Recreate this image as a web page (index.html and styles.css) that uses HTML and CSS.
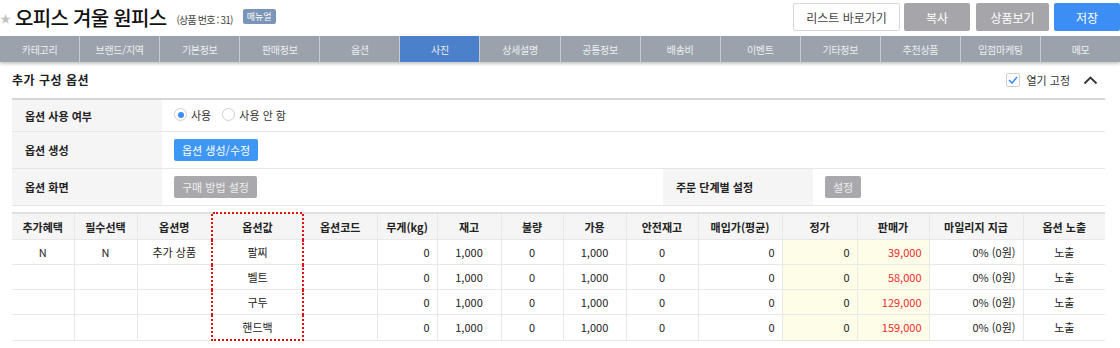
FILE: index.html
```html
<!DOCTYPE html>
<html lang="ko">
<head>
    <meta charset="UTF-8">
    <title>오피스 겨울 원피스</title>
    <link rel="stylesheet" href="styles.css">
</head>
<body>
<div class="topbar">
    <div class="title-area">
        <span class="star">&#9733;</span>
        <h1 class="title">오피스 겨울 원피스</h1>
        <span class="prod-no">(상품 번호 : 31)</span>
        <span class="manual">매뉴얼</span>
    </div>
    <div class="actions">
        <button class="btn btn-white">리스트 바로가기</button>
        <button class="btn btn-grey w-copy">복사</button>
        <button class="btn btn-grey w-view">상품보기</button>
        <button class="btn btn-blue w-save">저장</button>
    </div>
</div>

<div class="tabs">
    <div class="tab">카테고리</div>
    <div class="tab">브랜드/지역</div>
    <div class="tab">기본정보</div>
    <div class="tab">판매정보</div>
    <div class="tab">옵션</div>
    <div class="tab active">사진</div>
    <div class="tab">상세설명</div>
    <div class="tab">공통정보</div>
    <div class="tab">배송비</div>
    <div class="tab">이벤트</div>
    <div class="tab">기타정보</div>
    <div class="tab">추천상품</div>
    <div class="tab">입점마케팅</div>
    <div class="tab">메모</div>
</div>

<div class="section">
    <div class="section-head">
        <h2 class="section-title">추가 구성 옵션</h2>
        <div class="head-right">
            <span class="check">
                <svg width="10" height="8" viewBox="0 0 10 8"><path d="M1 4 L4 7 L9 1" fill="none" stroke="#3c8ef5" stroke-width="1.6"/></svg>
            </span>
            <span class="fix-label">열기 고정</span>
            <svg class="caret" width="15" height="10" viewBox="0 0 15 10"><path d="M1.5 8.5 L7.5 2.5 L13.5 8.5" fill="none" stroke="#333" stroke-width="1.8"/></svg>
        </div>
    </div>

    <table class="form">
        <colgroup>
            <col class="c-label">
            <col class="c-value">
            <col class="c-label">
            <col>
        </colgroup>
        <tr class="r1">
            <th>옵션 사용 여부</th>
            <td colspan="3">
                <label class="radio"><span class="dot on"></span>사용</label>
                <label class="radio"><span class="dot"></span>사용 안 함</label>
            </td>
        </tr>
        <tr>
            <th>옵션 생성</th>
            <td colspan="3"><button class="sbtn sbtn-blue">옵션 생성/수정</button></td>
        </tr>
        <tr>
            <th>옵션 화면</th>
            <td><button class="sbtn sbtn-grey">구매 방법 설정</button></td>
            <th>주문 단계별 설정</th>
            <td><button class="sbtn sbtn-grey">설정</button></td>
        </tr>
    </table>

    <table class="opts">
        <colgroup>
            <col style="width:62px"><col style="width:63px"><col style="width:75px"><col style="width:91px">
            <col style="width:74px"><col style="width:60px"><col style="width:64px"><col style="width:62px">
            <col style="width:63px"><col style="width:72px"><col style="width:84px"><col style="width:75px">
            <col style="width:72px"><col style="width:94px"><col style="width:82px">
        </colgroup>
        <thead>
        <tr>
            <th>추가혜택</th><th>필수선택</th><th>옵션명</th><th class="pick">옵션값</th><th>옵션코드</th>
            <th>무게(kg)</th><th>재고</th><th>불량</th><th>가용</th><th>안전재고</th>
            <th>매입가(평균)</th><th>정가</th><th>판매가</th><th>마일리지 지급</th><th>옵션 노출</th>
        </tr>
        </thead>
        <tbody>
        <tr>
            <td>N</td><td>N</td><td>추가 상품</td><td class="pick">팔찌</td><td></td>
            <td class="r">0</td><td>1,000</td><td>0</td><td>1,000</td><td>0</td>
            <td class="r">0</td><td class="r yel">0</td><td class="r yel red">39,000</td><td class="r">0% (0원)</td><td>노출</td>
        </tr>
        <tr>
            <td></td><td></td><td></td><td class="pick">벨트</td><td></td>
            <td class="r">0</td><td>1,000</td><td>0</td><td>1,000</td><td>0</td>
            <td class="r">0</td><td class="r yel">0</td><td class="r yel red">58,000</td><td class="r">0% (0원)</td><td>노출</td>
        </tr>
        <tr>
            <td></td><td></td><td></td><td class="pick">구두</td><td></td>
            <td class="r">0</td><td>1,000</td><td>0</td><td>1,000</td><td>0</td>
            <td class="r">0</td><td class="r yel">0</td><td class="r yel red">129,000</td><td class="r">0% (0원)</td><td>노출</td>
        </tr>
        <tr class="last">
            <td></td><td></td><td></td><td class="pick">핸드백</td><td></td>
            <td class="r">0</td><td>1,000</td><td>0</td><td>1,000</td><td>0</td>
            <td class="r">0</td><td class="r yel">0</td><td class="r yel red">159,000</td><td class="r">0% (0원)</td><td>노출</td>
        </tr>
        </tbody>
    </table>
</div>
</body>
</html>
```

FILE: styles.css
```css
body {
    margin: 0;
    background: #fff;
    font-family: "Noto Sans CJK KR", "Noto Sans", sans-serif;
    color: #333;
    font-size: 11px;
}

/* 상단 제목 + 버튼 */
.topbar {
    display: flex;
    justify-content: space-between;
    align-items: center;
    height: 34px;
}
.title-area {
    display: flex;
    align-items: center;
}
.star {
    color: #c4c4c4;
    font-size: 11px;
    margin: 2px 4px 0 0;
}
.title {
    margin: 0;
    font-size: 20px;
    font-weight: 500;
    color: #111;
    letter-spacing: -0.7px;
}
.prod-no {
    font-size: 10px;
    color: #444;
    margin: 4px 0 0 10px;
    letter-spacing: -0.8px;
}
.manual {
    background: #7b95b9;
    color: #fff;
    font-size: 9px;
    padding: 1px 4px;
    border-radius: 2px;
    margin: -1px 0 0 10px;
}

.actions {
    display: flex;
    align-items: center;
}
.btn {
    height: 28px;
    border: none;
    border-radius: 2px;
    font-family: inherit;
    font-size: 12px;
    color: #fff;
    margin-left: 5px;
    padding: 0;
}
.btn-white {
    width: 107px;
    background: #fff;
    border: 1px solid #d8d8d8;
    color: #444;
}
.btn-grey {
    background: #a6a6aa;
}
.btn-blue {
    background: #3c8ef5;
}
.w-copy { width: 66px; margin-left: 4px; }
.w-view { width: 73px; margin-left: 6px; }
.w-save { width: 66px; }

/* 탭 */
.tabs {
    display: flex;
    margin-top: 2px;
    height: 26px;
    background: #9ba2ac;
    box-shadow: 0 2px 3px rgba(0, 0, 0, 0.22);
}
.tab {
    flex: 1;
    display: flex;
    justify-content: center;
    align-items: center;
    color: #eceef1;
    font-size: 10px;
    border-right: 1px solid #c9cdd3;
    letter-spacing: -0.3px;
}
.tab:last-child {
    border-right: none;
}
.tab.active {
    background: #4b81ca;
}

/* 섹션 */
.section {
    padding: 0 15px 0 12px;
}
.section-head {
    display: flex;
    justify-content: space-between;
    align-items: center;
    height: 33px;
    padding-top: 1px;
    margin-bottom: 2px;
}
.section-title {
    margin: 0;
    font-size: 12px;
    font-weight: 700;
    color: #222;
    letter-spacing: 0.5px;
}
.head-right {
    display: flex;
    align-items: center;
    padding-right: 7px;
}
.check {
    width: 12px;
    height: 12px;
    border: 1px solid #cfcfcf;
    border-radius: 2px;
    display: flex;
    justify-content: center;
    align-items: center;
}
.fix-label {
    margin-left: 6px;
    font-size: 11px;
    color: #333;
}
.caret {
    margin-left: 13px;
}

/* 옵션 설정 폼 */
.form {
    width: 100%;
    border-collapse: collapse;
    border-top: 2px solid #d6d6d6;
}
.c-label { width: 150px; }
.c-value { width: 501px; }
.form th {
    background: #f5f5f5;
    text-align: left;
    padding: 0 0 0 13px;
    font-weight: 700;
    color: #222;
    height: 36px;
    border-bottom: 1px solid #e6e6e6;
}
.form td {
    padding: 0 12px;
    border-bottom: 1px solid #e6e6e6;
}
.form .r1 th,
.form .r1 td {
    height: 31px;
}
.radio {
    display: inline-flex;
    align-items: center;
    margin-right: 8px;
}
.dot {
    width: 11px;
    height: 11px;
    border: 1px solid #cfcfcf;
    border-radius: 50%;
    margin-right: 4px;
    position: relative;
}
.dot.on::after {
    content: "";
    position: absolute;
    left: 2.5px;
    top: 2.5px;
    width: 6px;
    height: 6px;
    border-radius: 50%;
    background: #3c8ef5;
}
.sbtn {
    height: 22px;
    border: none;
    border-radius: 2px;
    color: #fff;
    font-family: inherit;
    font-size: 11px;
    padding: 0 8px;
}
.sbtn-blue { background: #3e96f5; }
.sbtn-grey { background: #a9a9ad; color: #eee; }

/* 옵션 목록 */
.opts {
    margin-top: 6px;
    width: 1093px;
    table-layout: fixed;
    border-collapse: collapse;
}
.opts th {
    background: #f5f5f5;
    height: 25px;
    font-weight: 700;
    color: #222;
    border-top: 2px solid #e0e0e0;
    border-left: 1px solid #e8e8e8;
    border-bottom: 1px solid #e8e8e8;
    padding: 0;
}
.opts td {
    height: 24px;
    text-align: center;
    padding: 0 7px;
    border-left: 1px solid #e8e8e8;
    border-bottom: 1px solid #e8e8e8;
    color: #222;
}
.opts th:first-child,
.opts td:first-child {
    border-left: none;
}
.opts td.r { text-align: right; }
.opts td.yel { background: #fdfde8; }
.opts td.red { color: #ee2b2b; }

.opts .pick {
    border-left: 2px dotted #e01010;
    border-right: 2px dotted #e01010;
}
.opts th.pick { border-top: 2px dotted #e01010; }
.opts .last .pick { border-bottom: 2px dotted #e01010; }
```
